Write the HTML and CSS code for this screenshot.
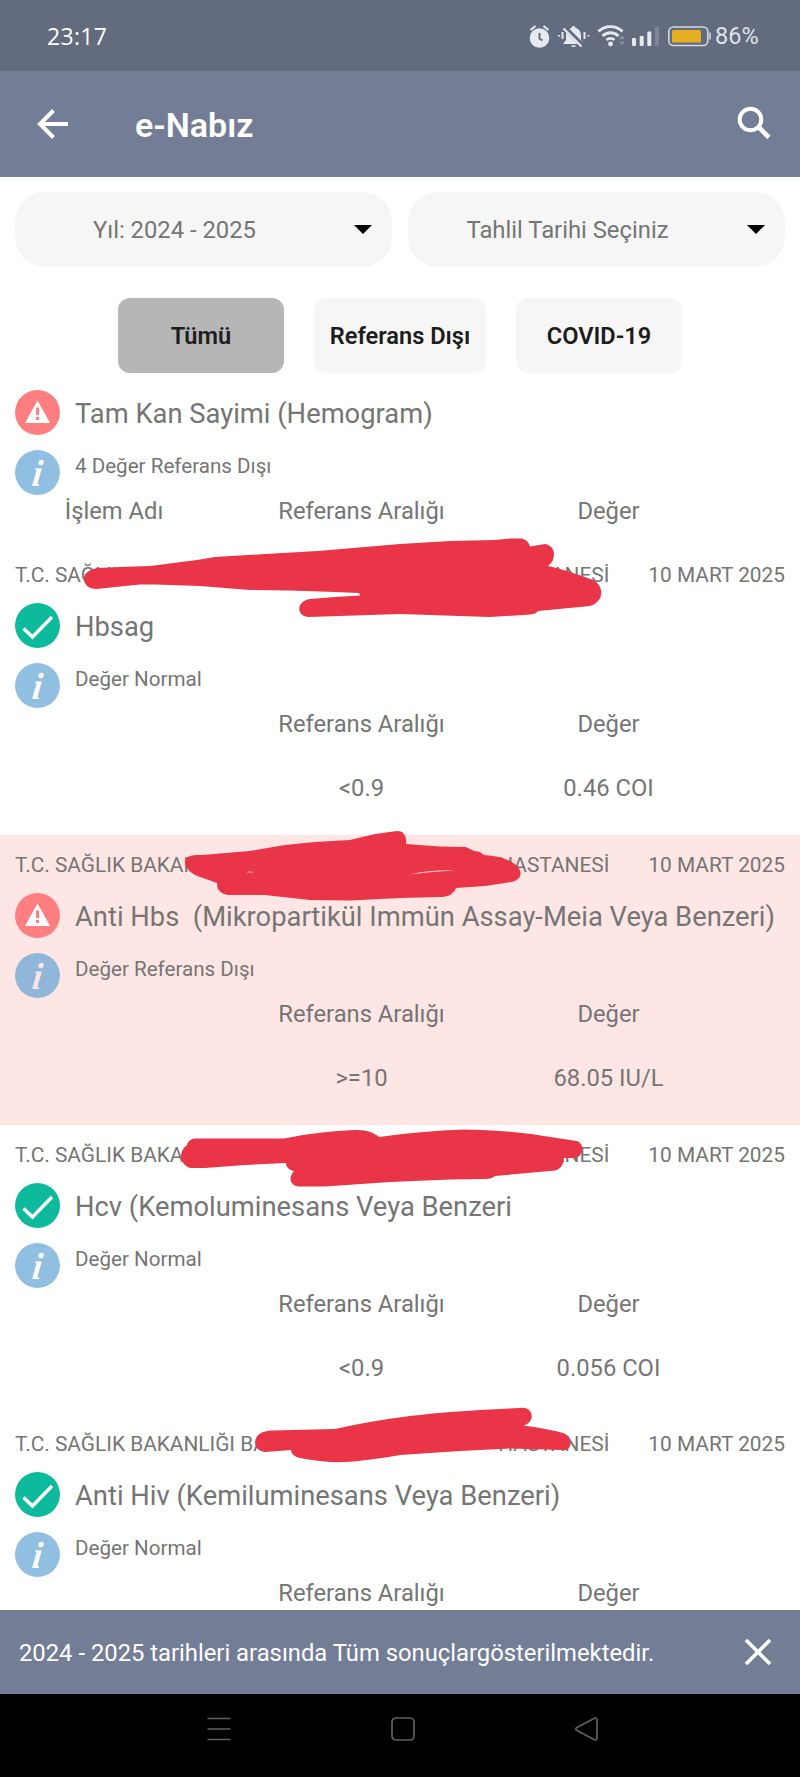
FILE: index.html
```html
<!DOCTYPE html>
<html lang="tr">
<head>
<meta charset="utf-8">
<title>e-Nabız</title>
<link rel="stylesheet" href="styles.css">
</head>
<body>
<svg class="defs" width="0" height="0">
  <symbol id="warn" viewBox="0 0 45 45"><circle cx="22.5" cy="22.5" r="22.5" fill="#ff7f80"/><path d="M22.500 10.500L35 33H10z" fill="#fff"/><path d="M22.500 17.500v7.500M22.500 27v3" stroke="#ff7f80" stroke-width="3"/></symbol>
  <symbol id="ok" viewBox="0 0 45 45"><circle cx="22.500" cy="22.500" r="22.500" fill="#0dbb9c"/><path d="M8.500 25.500l9 8.500L37 14" fill="none" stroke="#fff" stroke-width="3.400"/></symbol>
</svg>
<div class="screen">
  <div class="status">
    <span class="clock">23:17</span>
    <svg class="status-icons" width="184" height="30" viewBox="0 0 184 30">
      <g fill="#e6e9ef">
        <circle cx="11.500" cy="17" r="9.800"/><path d="M2.500 9l5-4M20.500 9l-5-4" stroke="#e6e9ef" stroke-width="2.200"/>
        <path d="M11.500 12v5.500l3 2" fill="none" stroke="#636b7f" stroke-width="2"/>
        <path d="M45.500 5c1.500 0 2 1 2 2 4 1 5.500 4 5.500 8v4l3 4H35l3-4v-4c0-4 2-7 5.500-8 0-1 .5-2 2-2zM43 24.500h5c-.5 2-4.500 2-5 0z"/>
        <path d="M37 7l18 18" stroke="#636b7f" stroke-width="5"/><path d="M35.500 7.500l18 18" stroke="#e6e9ef" stroke-width="2.200"/>
        <path d="M31 14v1.500M34.500 11v7M56.500 11v7M60.500 14v1.500" stroke="#e6e9ef" stroke-width="2"/>
      </g>
      <g fill="none" stroke="#e6e9ef" stroke-width="2.800">
        <path d="M70.500 10.500a17 17 0 0 1 24 0M74.500 15a11.500 11.500 0 0 1 16 0M78.500 19a6 6 0 0 1 8 0"/>
      </g>
      <circle cx="82.500" cy="23" r="2.400" fill="#e6e9ef"/>
      <path d="M91 18l3-3.500 3 3.500zM91 20.500l3 3.500 3-3.500z" fill="#8991a2"/>
      <g fill="#e6e9ef"><rect x="104" y="17" width="4" height="8" rx="1"/><rect x="111.700" y="15" width="4" height="10" rx="1"/><rect x="119.300" y="10.500" width="4" height="14.500" rx="1"/><rect x="127" y="5.500" width="4" height="19.500" rx="1" opacity=".22"/></g>
      <rect x="140.800" y="6" width="39" height="18.500" rx="4.500" fill="none" stroke="#d5d8df" stroke-width="1.600"/>
      <path d="M182 11.500v7" stroke="#d5d8df" stroke-width="1.600"/><rect x="144" y="9" width="29" height="12.500" rx="1.500" fill="#e6ae22"/>
    </svg>
    <span class="battery">86%</span>
  </div>
  <div class="appbar">
    <svg class="back" width="34" height="34" viewBox="0 0 34 34"><path d="M33 17H6M18.500 3.500L5 17l13.500 13.500" fill="none" stroke="#fff" stroke-width="4"/></svg>
    <h1 class="title">e-Nabız</h1>
    <svg class="search" width="34" height="34" viewBox="0 0 34 34"><circle cx="13.500" cy="13.500" r="10.800" fill="none" stroke="#fff" stroke-width="4"/><path d="M21.500 21L32 31.500" stroke="#fff" stroke-width="4.600"/></svg>
  </div>
  <div class="filters">
    <div class="select"><span class="select-text">Yıl: 2024 - 2025</span><i class="caret"></i></div>
    <div class="select"><span class="select-text">Tahlil Tarihi Seçiniz</span><i class="caret"></i></div>
  </div>
  <div class="chips">
    <div class="chip active">Tümü</div><div class="chip wide">Referans Dışı</div><div class="chip">COVID-19</div>
  </div>
  <div class="list">
    <div class="record compact">
      <div class="line"><svg class="badge"><use href="#warn"/></svg><span class="name">Tam Kan Sayimi (Hemogram)</span></div>
      <div class="line note"><span class="badge info"><span class="info-letter">i</span></span><span class="result">4 Değer Referans Dışı</span></div>
      <div class="cols"><span class="first">İşlem Adı</span><span>Referans Aralığı</span><span>Değer</span></div>
    </div>
    <div class="record">
      <div class="head"><span>T.C. SAĞLIK</span><span class="end">HASTANESİ</span><span>10 MART 2025</span></div>
      <div class="line"><svg class="badge"><use href="#ok"/></svg><span class="name">Hbsag</span></div>
      <div class="line note"><span class="badge info"><span class="info-letter">i</span></span><span class="result">Değer Normal</span></div>
      <div class="cols"><span class="first"></span><span>Referans Aralığı</span><span>Değer</span></div>
      <div class="cols values"><span class="first"></span><span>&lt;0.9</span><span>0.46 COI</span></div>
    </div>
    <div class="record alert">
      <div class="head"><span>T.C. SAĞLIK BAKANLIĞI</span><span class="end">HASTANESİ</span><span>10 MART 2025</span></div>
      <div class="line"><svg class="badge"><use href="#warn"/></svg><span class="name">Anti Hbs&nbsp; (Mikropartikül Immün Assay-Meia Veya Benzeri)</span></div>
      <div class="line note"><span class="badge info"><span class="info-letter">i</span></span><span class="result">Değer Referans Dışı</span></div>
      <div class="cols"><span class="first"></span><span>Referans Aralığı</span><span>Değer</span></div>
      <div class="cols values"><span class="first"></span><span>&gt;=10</span><span>68.05 IU/L</span></div>
    </div>
    <div class="record">
      <div class="head"><span>T.C. SAĞLIK BAKANLIĞI</span><span class="end">HASTANESİ</span><span>10 MART 2025</span></div>
      <div class="line"><svg class="badge"><use href="#ok"/></svg><span class="name">Hcv (Kemoluminesans Veya Benzeri</span></div>
      <div class="line note"><span class="badge info"><span class="info-letter">i</span></span><span class="result">Değer Normal</span></div>
      <div class="cols"><span class="first"></span><span>Referans Aralığı</span><span>Değer</span></div>
      <div class="cols values"><span class="first"></span><span>&lt;0.9</span><span>0.056 COI</span></div>
    </div>
    <div class="record">
      <div class="head"><span>T.C. SAĞLIK BAKANLIĞI BA</span><span class="end">HASTANESİ</span><span>10 MART 2025</span></div>
      <div class="line"><svg class="badge"><use href="#ok"/></svg><span class="name">Anti Hiv (Kemiluminesans Veya Benzeri)</span></div>
      <div class="line note"><span class="badge info"><span class="info-letter">i</span></span><span class="result">Değer Normal</span></div>
      <div class="cols"><span class="first"></span><span>Referans Aralığı</span><span>Değer</span></div>
    </div>
  </div>
  <div class="snackbar">
    <span class="message">2024 - 2025 tarihleri arasında Tüm sonuçlargösterilmektedir.</span>
    <svg width="28" height="28" viewBox="0 0 28 28"><path d="M2 2l24 24M26 2L2 26" stroke="#fff" stroke-width="3.600"/></svg>
  </div>
  <div class="navbar">
    <svg width="24" height="24" viewBox="0 0 24 24"><path d="M.5 1.500h23M.5 12h23M.5 22.500h23"/></svg>
    <svg width="24" height="24" viewBox="0 0 24 24"><rect x="1" y="1" width="22" height="22" rx="4"/></svg>
    <svg width="24" height="24" viewBox="0 0 24 24"><path d="M19 1.500L2 10.500q-2.500 1.500 0 3l17 9q3 1 3-1.500V3q0-2.500-3-1.500z"/></svg>
  </div>
  <svg class="scribbles" width="800" height="1777" viewBox="0 0 800 1777" fill="#ea3548">
    <path d="M84 579C84 572 90 570 97 568L120 567 150 566 197 560 215 557 265 554 318 551 400 544 450 541 495 540 510 538.500 522 538.500C527 540 529 543 530 546.500L545 544C554 546 556 553 552 562L548 566Q560 568 593 580C605 586 604 602 590 606L538 611Q536 614 530 614.500L490 617 460 616 400 614 370 615 308 617C296 616 296 601 310 599L335 597 360 595.500 359 593 335 592 290 590.500 250 590 200 586 155 584.500 140 584.500 115 587 97 589C88 589 84 584 84 579z"/>
    <path d="M185 861C186 855 195 855 202 855L250 851 285 845 315 842 350 840 375 834 397 831C405 831 407 838 406 844L440 846.500 466 847 474 851 480 852 484 855Q500 856 510 861C524 868 524 880 511 882L485 886 456 888C453 895 447 897 440 897L400 898 350 900.500 310 900 265 895 228 895C219 893 217 889 217 883L203 878C190 874 185 868 185 861z"/>
    <path d="M410 874.500Q432 869.500 455 870.500Q432 871.500 410 874.500zM246 872Q250 871.200 254 872Q250 873.200 246 872z" fill="#fcc5c8"/>
    <path d="M187 1145C188 1140 192 1138.500 197 1138.500H284Q320 1131 355 1130Q370 1129 379 1137Q420 1131 465 1129.500Q510 1130 550 1137L577 1141C585 1144 584 1156 575 1158H564C563 1168 558 1171 550 1171L495 1176Q492 1179 485 1179L450 1179.500 390 1182 325 1186.500H298C290 1185 288 1178 294 1171C288 1170 286 1166 286 1163L245 1165 205 1168H190C178 1163 179 1151 187 1145z"/>
    <path d="M255 1442C256 1434 262 1431 272 1430.500L335 1429Q370 1421 410 1416T520 1408C534 1406 536 1423 523 1425.500Q545 1428 563 1433C573 1436 573 1451 563 1450L510 1448.500 460 1451 400 1455Q365 1461 345 1462T300 1458C294 1457 291 1453 291 1450L265 1452C258 1451 255 1447 255 1442z"/>
  </svg>
</div>
</body>
</html>
```

FILE: styles.css
```css
* { box-sizing: border-box; }
body { margin: 0; background: #fff; font-family: Roboto, sans-serif; color: #757575; }
.defs { position: absolute; }
.screen { position: relative; width: 800px; height: 1777px; display: flex; flex-direction: column; overflow: hidden; background: #fff; white-space: nowrap; }
.status { height: 71px; flex: none; display: flex; align-items: center; background: #636b7f; color: #eef1f6; padding: 0 41px 0 47px; }
.clock { font-family: "Open Sans", Roboto, sans-serif; font-size: 23px; font-weight: 500; letter-spacing: .3px; flex: 1; color: #fff; }
.status-icons { margin-right: 3px; }
.battery { font-size: 23.500px; width: 44px; color: #dfe2e9; }
.appbar { height: 106px; flex: none; display: flex; align-items: center; background: #737d96; padding: 0 29px 0 35px; }
.title { margin: 2px 0 0 66px; font-size: 34px; font-weight: 600; color: #fff; flex: 1; }
.search { margin-top: -3px; }
.filters { display: flex; gap: 16px; padding: 15px 15px 0; }
.select { flex: 1; height: 75px; border-radius: 30px; background: #f6f6f6; display: flex; align-items: center; padding: 0 20px 0 0; font-size: 23.800px; }
.select-text { flex: 1; text-align: center; padding: 1px 20px 0 0; }
.caret { border: 9px solid transparent; border-top-color: #000; border-bottom: 0; }
.chips { display: flex; justify-content: center; gap: 30px; margin: 30.500px 0 0; }
.chip { width: 166px; height: 75px; border-radius: 12px; background: #f6f6f6; color: #1d1d1d; font-size: 23.600px; font-weight: 600; display: flex; align-items: center; justify-content: center; padding-top: 2px; }
.chip.wide { width: 172px; }
.chip.active { background: #b6b6b6; }
.list { flex: 1; min-height: 0; overflow: hidden; padding-top: 17.500px; }
.record { height: 289.500px; }
.record.compact { height: 155px; }
.alert { height: 290px; background: #fee6e4; }
.head { height: 58px; padding: 18px 15px 0; display: flex; font-size: 20.850px; line-height: 24px; }
.head .end { margin-left: auto; margin-right: 39px; }
.line { display: flex; height: 60px; padding-left: 15px; }
.badge { width: 45px; height: 45px; flex: none; margin-right: 15px; }
.name { font-size: 27.350px; line-height: 49px; }
.note { height: 47px; }
.result { font-size: 20.600px; line-height: 33px; }
.info { border-radius: 50%; background: #90bfe2; text-align: center; }
.info-letter { display: block; font: italic bold 38px/46px "Liberation Serif", serif; color: #fff; transform: skewX(-7deg) scaleX(.9); }
.alert .info { background: #90b7da; }
.alert .info-letter { color: #fee6e4; }
.cols { display: grid; grid-template-columns: 238px 247px 247px; text-align: center; font-size: 23.750px; line-height: 29px; height: 30px; }
.first { padding-right: 10px; }
.values { margin-top: 34px; }
.snackbar { height: 84px; flex: none; display: flex; align-items: center; justify-content: space-between; padding: 0 28px 0 19px; background: #737d96; color: #fff; font-size: 23.800px; }
.message { padding-top: 2px; }
.navbar { height: 83px; flex: none; background: #000; display: flex; gap: 160px; padding: 23px 0 0 207px; fill: none; stroke: #606060; stroke-width: 1.700; }
.scribbles { position: absolute; top: 0; left: 0; }
```
